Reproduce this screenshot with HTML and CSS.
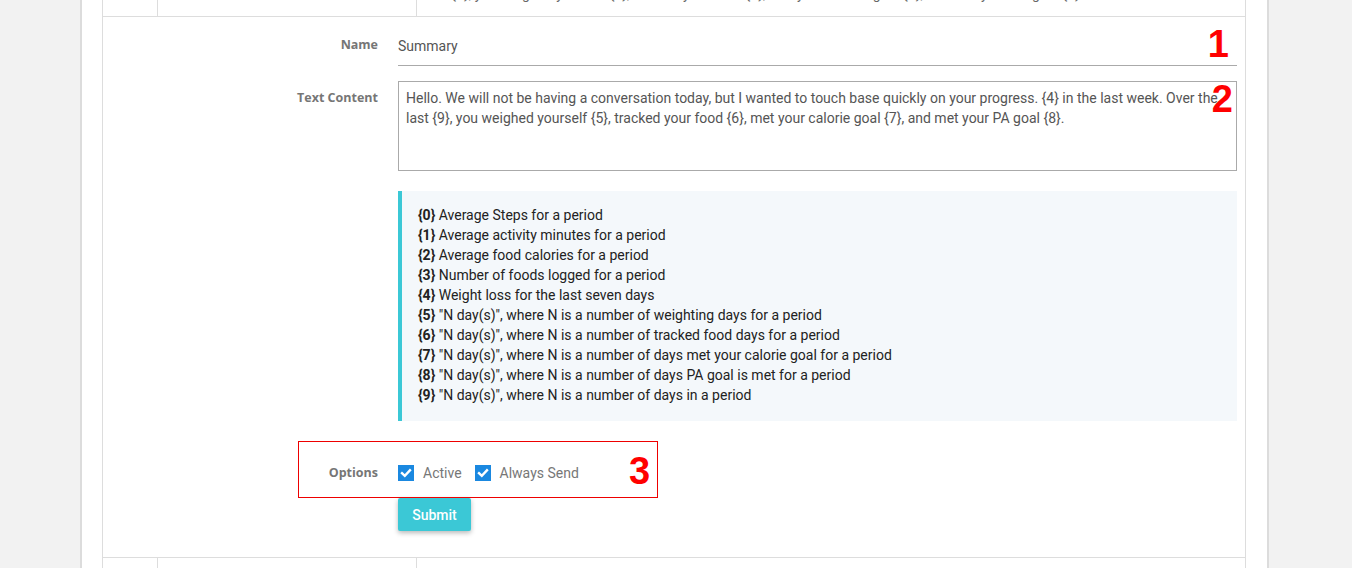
FILE: index.html
```html
<!DOCTYPE html>
<html>
<head>
<meta charset="utf-8">
<link rel="stylesheet" href="styles.css">
</head>
<body>
<div class="page">
  <div class="table">
    <div class="row">
      <div class="cell c1"></div>
      <div class="cell c2"></div>
      <div class="cell c3 top-text">Hello. We will not be having a conversation today, but I wanted to touch base quickly on your progress. {4} in the last week. Over the last {9}, you weighed yourself {5}, tracked your food {6}, met your calorie goal {7}, and met your PA goal {8}.</div>
    </div>
    <form class="form-row">
      <div class="group group-name">
        <label class="label label-name">Name</label>
        <div class="field">
          <input class="input" type="text" value="Summary">
        </div>
        <span class="mark mark-1">1</span>
      </div>
      <div class="group group-text">
        <label class="label label-text">Text Content</label>
        <div class="field">
          <div class="textarea">Hello. We will not be having a conversation today, but I wanted to touch base quickly on your progress. {4} in the last week. Over the last {9}, you weighed yourself {5}, tracked your food {6}, met your calorie goal {7}, and met your PA goal {8}.</div>
        </div>
        <span class="mark mark-2">2</span>
      </div>
      <div class="group group-help">
        <div class="help">
          <div><b>{0}</b> Average Steps for a period</div>
          <div><b>{1}</b> Average activity minutes for a period</div>
          <div><b>{2}</b> Average food calories for a period</div>
          <div><b>{3}</b> Number of foods logged for a period</div>
          <div><b>{4}</b> Weight loss for the last seven days</div>
          <div><b>{5}</b> "N day(s)", where N is a number of weighting days for a period</div>
          <div><b>{6}</b> "N day(s)", where N is a number of tracked food days for a period</div>
          <div><b>{7}</b> "N day(s)", where N is a number of days met your calorie goal for a period</div>
          <div><b>{8}</b> "N day(s)", where N is a number of days PA goal is met for a period</div>
          <div><b>{9}</b> "N day(s)", where N is a number of days in a period</div>
        </div>
      </div>
      <div class="options-wrap">
        <div class="options">
          <label class="label label-options">Options</label>
          <label class="check"><span class="box"><svg viewBox="0 0 16 16" width="16" height="16"><path d="M4 8.2 L6.8 10.8 L12 5.2" fill="none" stroke="#fff" stroke-width="2.4" stroke-linecap="square"/></svg></span>Active</label>
          <label class="check"><span class="box"><svg viewBox="0 0 16 16" width="16" height="16"><path d="M4 8.2 L6.8 10.8 L12 5.2" fill="none" stroke="#fff" stroke-width="2.4" stroke-linecap="square"/></svg></span>Always Send</label>
          <span class="mark mark-3">3</span>
        </div>
      </div>
      <div class="submit-wrap">
        <button class="btn" type="button">Submit</button>
      </div>
    </form>
    <div class="row">
      <div class="cell c1"></div>
      <div class="cell c2"></div>
      <div class="cell c3"></div>
    </div>
  </div>
</div>
</body>
</html>
```
FILE: styles.css
```css
html, body {
  margin: 0;
  padding: 0;
  background: #f2f2f2;
  height: 100%;
  overflow: hidden;
}
body {
  font-family: Roboto, "Liberation Sans", sans-serif;
  font-size: 14px;
  color: #555;
}
.page {
  margin-left: 80px;
  min-height: 700px;
  background: #fff;
  border-left: 2px solid #dcdcdc;
  border-right: 2px solid #dcdcdc;
  padding: 0 21px 0 20px;
  box-sizing: content-box;
  width: 1144px;
  margin-top: -44px;
}
.table {
  border-left: 1px solid #ddd;
  border-right: 1px solid #ddd;
}
.row {
  display: grid;
  grid-template-columns: 55px 259px 1fr;
  border-bottom: 1px solid #ddd;
}
.row + .form-row + .row { border-bottom: none; }
.cell {
  padding: 10px 0 10px 8px;
  line-height: 20px;
  min-height: 40px;
  color: #666;
}
.top-text { padding: 8px 8px 12px 8px; }
.c1, .c2 { border-right: 1px solid #ddd; }
.form-row {
  display: block;
  border-bottom: 1px solid #ddd;
  padding: 15px 8px 26px 0;
  margin: 0;
}
.group {
  display: flex;
  gap: 20px;
  position: relative;
}
.label {
  width: 275px;
  flex: none;
  text-align: right;
  font-family: "Open Sans", sans-serif;
  font-weight: 700;
  font-size: 12.5px;
  line-height: 18px;
  color: #767676;
}
.label-name { padding-top: 4px; }
.label-text { padding-top: 8px; }
.field { flex: 1; }
.input {
  display: block;
  width: 100%;
  box-sizing: border-box;
  height: 34px;
  border: none;
  border-bottom: 1px solid #aaa;
  padding: 0 0 5px 0;
  font-family: Roboto, sans-serif;
  font-size: 14px;
  color: #555;
  outline: none;
  background: transparent;
}
.group-text { margin-top: 15px; }
.textarea {
  border: 1px solid #aaa;
  padding: 6px 7px;
  box-sizing: border-box;
  height: 90px;
  line-height: 20px;
  color: #555;
}
.group-help {
  margin-top: 20px;
  padding-left: 295px;
}
.help {
  flex: 1;
  background: #f4f8fb;
  border-left: 4px solid #3bc8d6;
  padding: 14px 16px 16px;
  line-height: 20px;
  color: #222;
}
.help b { font-weight: 700; }
.options-wrap {
  margin-top: 20px;
  padding-left: 195px;
}
.options {
  position: relative;
  display: flex;
  align-items: center;
  width: 358px;
  border: 1px solid #e00;
  padding: 21px 0 15px;
  line-height: 18px;
}
.label-options {
  width: 79px;
  margin-right: 20px;
  padding-top: 1px;
}
.check {
  display: flex;
  align-items: center;
  color: #777;
  margin-right: 13px;
}
.box {
  width: 16px;
  height: 16px;
  background: #1a88e0;
  margin-right: 9px;
  display: block;
}
.box svg { display: block; }
.mark {
  position: absolute;
  font-family: "Liberation Sans", Arial, sans-serif;
  font-weight: 700;
  font-size: 38px;
  line-height: 38px;
  color: #f00;
}
.mark-1 { right: 8px; top: -7px; }
.mark-2 { right: 4px; top: -1px; }
.mark-3 { left: 330px; top: 10px; }
.submit-wrap {
  padding-left: 295px;
}
.btn {
  width: 73px;
  height: 33px;
  border: none;
  border-radius: 2px;
  background: #3bc8d6;
  color: #fff;
  font-family: Roboto, sans-serif;
  font-size: 14px;
  font-weight: 500;
  box-shadow: 0 2px 5px rgba(0,0,0,0.28);
  padding: 0;
}
```
